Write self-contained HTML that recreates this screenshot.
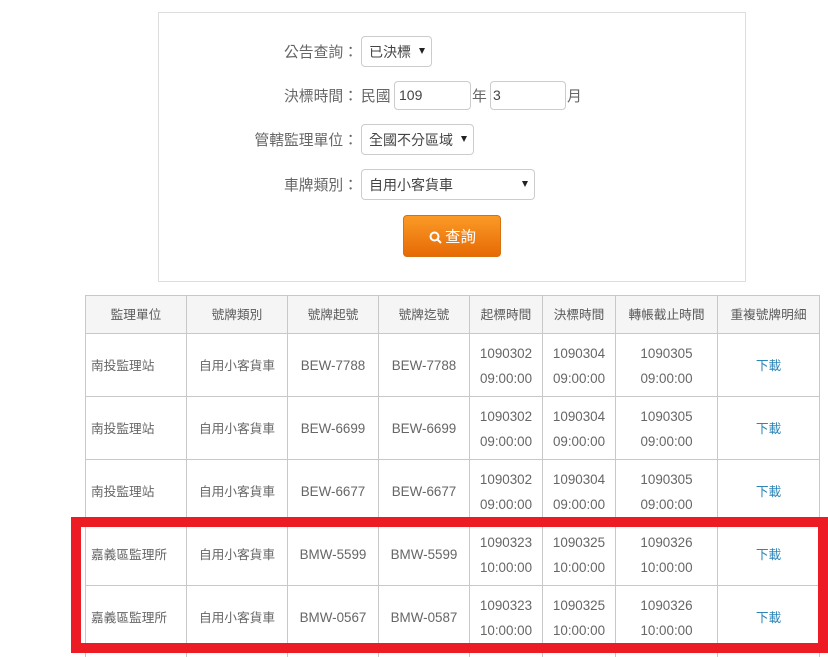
<!DOCTYPE html>
<html lang="zh-Hant">
<head>
<meta charset="utf-8">
<title>公告查詢</title>
<style>
html,body{margin:0;padding:0;background:#fff;width:828px;height:657px;overflow:hidden;}
body{font-family:"Liberation Sans","Noto Sans CJK TC",sans-serif;color:#666;}
#w{position:relative;width:828px;height:657px;overflow:hidden;}
.a{position:absolute;white-space:nowrap;}
.box{left:158px;top:12px;width:586px;height:268px;border:1px solid #ddd;box-sizing:content-box;}
.lbl{font-size:14.8px;line-height:20px;color:#666;text-align:right;right:470px;}
.ctl{box-sizing:border-box;border:1px solid #ccc;border-radius:4px;background:#fff;color:#444;font-family:inherit;font-size:14px;margin:0;padding:0 0 0 7px;outline:none;appearance:none;-webkit-appearance:none;}
input.ctl{padding-bottom:2px;}
.arr{width:0;height:0;border-left:3.5px solid transparent;border-right:3.5px solid transparent;border-top:6px solid #222;}
.txt{font-size:14.8px;line-height:20px;color:#666;}
.btn{left:403px;top:215px;width:98px;height:42px;box-sizing:border-box;border:1px solid #d9700f;border-radius:4px;background:linear-gradient(#fb9a26,#e66a05);color:#fff;font-family:inherit;font-size:15.5px;padding:0 0 0 17px;text-align:center;margin:0;}
.btn svg{position:absolute;left:25px;top:15px;}
table{position:absolute;left:85px;top:295px;border-collapse:collapse;table-layout:fixed;width:734px;font-size:12.7px;color:#666;}
td,th{border:1px solid #c8c8c8;padding:0;text-align:center;font-weight:normal;line-height:25px;vertical-align:middle;overflow:hidden;white-space:nowrap;}
th{background:#f5f5f5;height:35px;padding-top:2px;color:#5a5a5a;}
td{height:60px;padding-top:2px;}
td.l{text-align:left;padding-left:5px;}
td.n{font-size:13.4px;}
td.c{height:62px;padding-top:0;}
tr.e td{height:8px;padding:0;border-bottom:0;line-height:0;}
a{color:#2d86b8;text-decoration:none;}
.red{left:71px;top:517px;width:757px;height:136px;box-sizing:border-box;border:10px solid #ed1c24;}
</style>
</head>
<body>
<div id="w">
<div class="a box"></div>

<div class="a lbl" style="top:43px;">公告查詢：</div>
<select class="a ctl" style="left:361px;top:36px;width:71px;height:31px;"><option>已決標</option></select>
<div class="a arr" style="left:419px;top:48px;"></div>

<div class="a lbl" style="top:87px;">決標時間：</div>
<div class="a txt" style="left:361px;top:87px;">民國</div>
<input class="a ctl" style="left:394px;top:81px;width:77px;height:29px;padding-left:4px;" value="109">
<div class="a txt" style="left:472px;top:87px;">年</div>
<input class="a ctl" style="left:490px;top:81px;width:76px;height:29px;padding-left:2px;" value="3">
<div class="a txt" style="left:567px;top:87px;">月</div>

<div class="a lbl" style="top:131px;">管轄監理單位：</div>
<select class="a ctl" style="left:361px;top:124px;width:113px;height:31px;"><option>全國不分區域</option></select>
<div class="a arr" style="left:461px;top:136px;"></div>

<div class="a lbl" style="top:176px;">車牌類別：</div>
<select class="a ctl" style="left:361px;top:169px;width:174px;height:31px;"><option>自用小客貨車</option></select>
<div class="a arr" style="left:522px;top:181px;"></div>

<button class="a btn"><svg width="13" height="13" viewBox="0 0 13 13" fill="none" stroke="#fff" stroke-width="2"><circle cx="5.5" cy="5.5" r="4"/><path d="M8.5 8.5L12 12"/></svg>查詢</button>

<table>
<colgroup><col style="width:101px"><col style="width:101px"><col style="width:91px"><col style="width:91px"><col style="width:73px"><col style="width:73px"><col style="width:102px"><col style="width:102px"></colgroup>
<tr><th>監理單位</th><th>號牌類別</th><th>號牌起號</th><th>號牌迄號</th><th>起標時間</th><th>決標時間</th><th>轉帳截止時間</th><th>重複號牌明細</th></tr>
<tr><td class="l">南投監理站</td><td>自用小客貨車</td><td class="n c">BEW-7788</td><td class="n c">BEW-7788</td><td class="n">1090302<br>09:00:00</td><td class="n">1090304<br>09:00:00</td><td class="n">1090305<br>09:00:00</td><td><a href="#">下載</a></td></tr>
<tr><td class="l">南投監理站</td><td>自用小客貨車</td><td class="n c">BEW-6699</td><td class="n c">BEW-6699</td><td class="n">1090302<br>09:00:00</td><td class="n">1090304<br>09:00:00</td><td class="n">1090305<br>09:00:00</td><td><a href="#">下載</a></td></tr>
<tr><td class="l">南投監理站</td><td>自用小客貨車</td><td class="n c">BEW-6677</td><td class="n c">BEW-6677</td><td class="n">1090302<br>09:00:00</td><td class="n">1090304<br>09:00:00</td><td class="n">1090305<br>09:00:00</td><td><a href="#">下載</a></td></tr>
<tr><td class="l">嘉義區監理所</td><td>自用小客貨車</td><td class="n c">BMW-5599</td><td class="n c">BMW-5599</td><td class="n">1090323<br>10:00:00</td><td class="n">1090325<br>10:00:00</td><td class="n">1090326<br>10:00:00</td><td><a href="#">下載</a></td></tr>
<tr><td class="l">嘉義區監理所</td><td>自用小客貨車</td><td class="n c">BMW-0567</td><td class="n c">BMW-0587</td><td class="n">1090323<br>10:00:00</td><td class="n">1090325<br>10:00:00</td><td class="n">1090326<br>10:00:00</td><td><a href="#">下載</a></td></tr>
<tr class="e"><td></td><td></td><td></td><td></td><td></td><td></td><td></td><td></td></tr>
</table>

<div class="a red"></div>
</div>
</body>
</html>
